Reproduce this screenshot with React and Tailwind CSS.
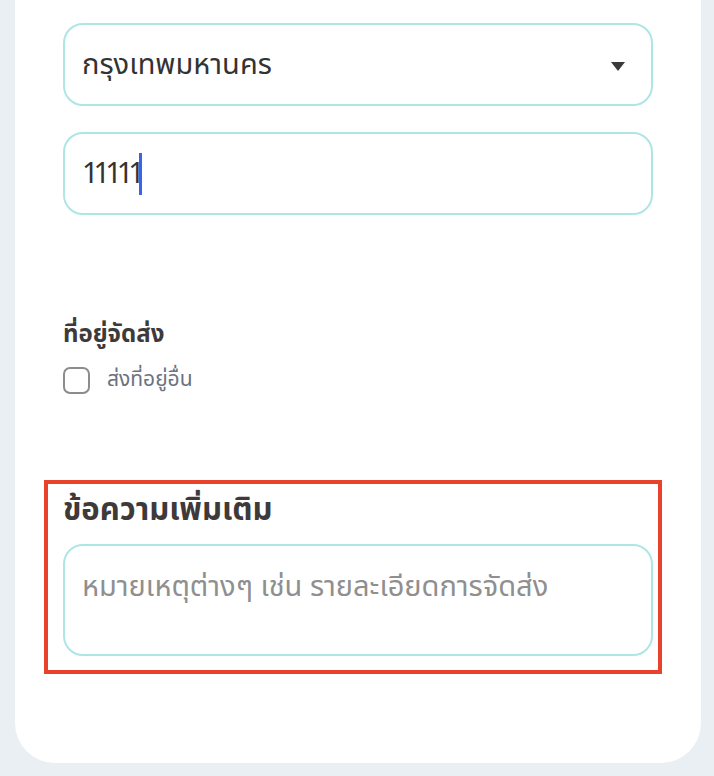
export default function App() {
  return (
    <div className="w-[714px] h-[776px] bg-[#e9eff3] overflow-hidden font-['Noto_Sans_Thai','Noto_Sans',sans-serif]">
      <div className="ml-[15px] mr-[13px] h-[763px] bg-white rounded-b-[40px] flex flex-col pl-[48px] pr-[48px]">
        <div className="mt-[23px] h-[83px] rounded-[20px] border-2 border-[#aee6e6] flex items-center pl-[17px] pr-[26px] justify-between">
          <span className="text-[29px] leading-[40px] text-[#333333]">กรุงเทพมหานคร</span>
          <svg width="14" height="9" viewBox="0 0 14 9" className="mt-[4px]">
            <path d="M0 0 L14 0 L7 9 Z" fill="#3a3a3a" />
          </svg>
        </div>
        <div className="mt-[26px] h-[83px] rounded-[20px] border-2 border-[#aee6e6] flex items-center pl-[17px]">
          <span className="text-[29px] leading-[40px] text-[#333333] tracking-[-5px]">11111</span>
          <span className="w-[3px] h-[42px] bg-[#3d63e6] -ml-[1px]"></span>
        </div>
        <div className="mt-[103px] text-[24px] font-bold text-[#3f3a3a] leading-[34px]">ที่อยู่จัดส่ง</div>
        <div className="mt-[13px] flex items-center">
          <div className="w-[27px] h-[27px] rounded-[7px] border-2 border-[#8c8c8c]"></div>
          <span className="ml-[17px] text-[21px] leading-[30px] text-[#6b7280]">ส่งที่อยู่อื่น</span>
        </div>
        <div className="mt-[85px] -ml-[19px] -mr-[9px] border-4 border-[#e8432a] pl-[15px] pr-[5px] pt-[7px] pb-[14px]">
          <div className="text-[31px] font-bold text-[#3f3a3a] leading-[40px]">ข้อความเพิ่มเติม</div>
          <div className="mt-[13px] h-[112px] rounded-[20px] border-2 border-[#aee6e6] pl-[17px] pt-[21px]">
            <div className="text-[29px] leading-[40px] text-[#8f8f8f]">หมายเหตุต่างๆ เช่น รายละเอียดการจัดส่ง</div>
          </div>
        </div>
      </div>
    </div>
  );
}
